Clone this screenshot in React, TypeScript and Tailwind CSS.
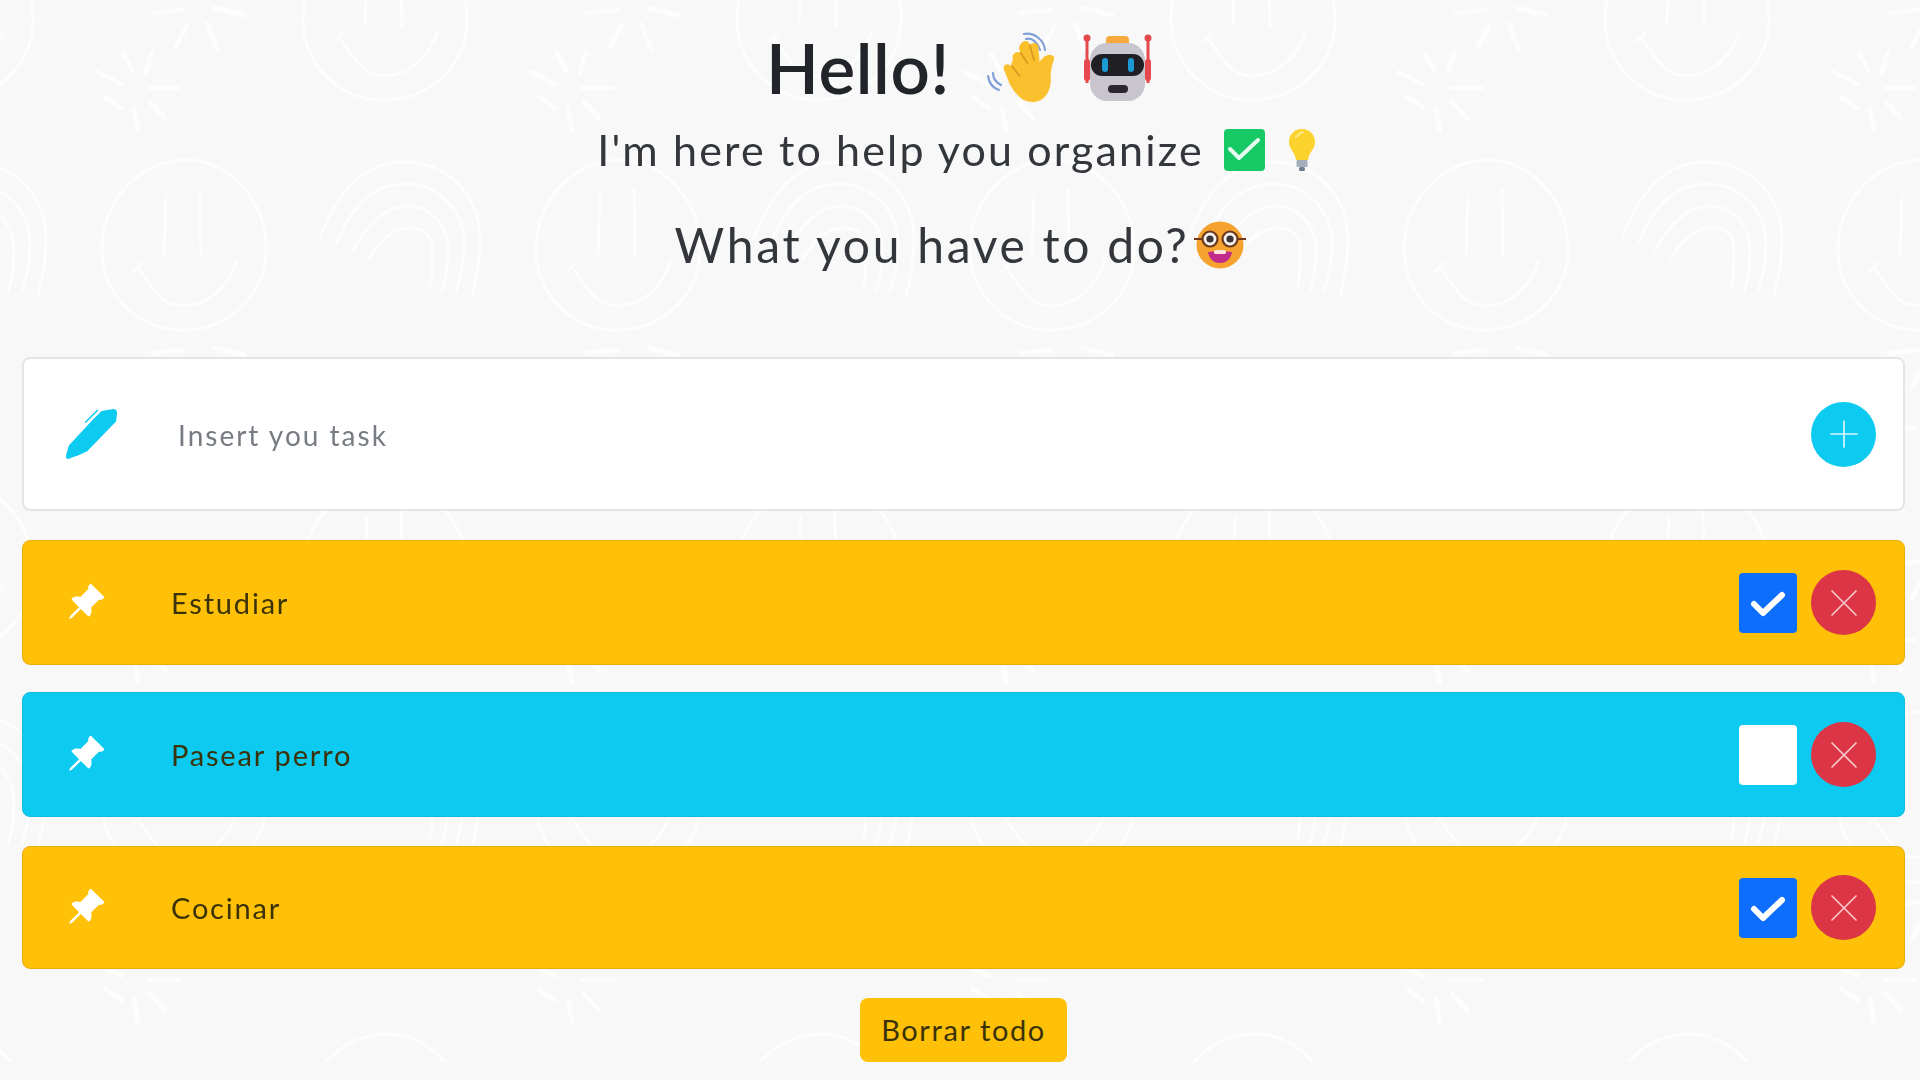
import { BsPinAngleFill } from "react-icons/bs";

function Face({ x, y }: { x: number; y: number }) {
  return (
    <g transform={`translate(${x} ${y})`}>
      <path d="M2 -85C40 -86 80 -50 82 0C84 50 45 84 0 85C-45 86 -82 50 -82 5C-82 -45 -45 -84 2 -85Z" />
      <path d="M-18 -50L-20 10M16 -55L17 12" />
      <path d="M-46 22C-36 36 -24 58 -8 60C14 64 40 50 50 22" />
      <path d="M-50 26L-42 18M52 16L50 26" />
    </g>
  );
}

function Rainbow({ x, y }: { x: number; y: number }) {
  return (
    <g transform={`translate(${x} ${y})`}>
      <path d="M-84 -2C-66 -50 -40 -78 0 -78C48 -78 76 -40 76 0C76 22 72 40 68 56" />
      <path d="M-68 4C-52 -36 -30 -56 2 -56C36 -56 60 -28 60 4C60 24 56 40 52 52" />
      <path d="M-52 12C-38 -14 -20 -34 4 -34C26 -34 44 -14 44 8C44 26 42 40 38 52" />
      <path d="M-36 20C-24 0 -12 -12 6 -12C18 -12 28 -6 28 8C28 24 28 38 26 46" />
    </g>
  );
}

function Sparkle({ x, y }: { x: number; y: number }) {
  const lines = [
    "M10 0L40 0",
    "M-18 -4L-42 -16",
    "M-18 20L-34 9",
    "M-5 20L-1 42",
    "M11 14L26 30",
    "M13 -36L7 -16",
    "M-16 -34L-7 -18",
    "M14 -75L44 -78",
    "M76 -80L105 -73",
    "M48 -62L37 -41",
    "M68 -64L78 -39",
  ];
  return (
    <g transform={`translate(${x} ${y})`}>
      {lines.map((d) => (
        <path key={d} d={d} strokeWidth="5" />
      ))}
    </g>
  );
}

function Background() {
  return (
    <svg className="absolute inset-0 w-full h-full" xmlns="http://www.w3.org/2000/svg">
      <defs>
        <pattern id="doodles" x="0" y="0" width="434" height="552" patternUnits="userSpaceOnUse">
          <g fill="none" stroke="#ffffff" strokeWidth="3" strokeLinecap="round" strokeLinejoin="round">
            <Face x={385} y={15} />
            <Face x={385} y={567} />
            <Face x={-49} y={15} />
            <Face x={-49} y={567} />
            <Face x={184} y={245} />
            <Rainbow x={404} y={240} />
            <Rainbow x={-30} y={240} />
            <Sparkle x={139} y={88} />
            <Sparkle x={139} y={428} />
          </g>
        </pattern>
      </defs>
      <rect width="100%" height="100%" fill="url(#doodles)" />
    </svg>
  );
}

function WaveEmoji() {
  return (
    <svg width="76" height="72" viewBox="0 0 76 72" className="shrink-0">
      <g fill="none" stroke="#7f9fd9" strokeWidth="2.2" strokeLinecap="round">
        <path d="M40 7C46 5 52 11 54 18" />
        <path d="M38 2C48 0 58 8 59 18" />
        <path d="M2 44C3 51 7 56 13 58" />
        <path d="M7 41C7 47 11 51 15 53" />
      </g>
      <g transform="translate(7 0) scale(1.11 1)">
        <path d="M25 12C28 7 33 9 33 13C36 9 42 11 41 17L42 30C45 24 52 20 55 25C56 28 52 33 52 44C53 60 46 70 36 70C26 70 20 62 15 52L10 38C8 33 13 30 16 34L18 27C16 22 22 18 25 21C23 17 23 15 25 12Z" fill="#fbc02d" />
        <path d="M25 21L31 31M33 13L37 28M17 34L24 44" stroke="#d99a1f" strokeWidth="1.6" fill="none" strokeLinecap="round" />
      </g>
    </svg>
  );
}

function RobotEmoji() {
  return (
    <svg width="72" height="70" viewBox="0 0 72 70" className="shrink-0">
      <g stroke="#e5484d" strokeWidth="3" fill="none">
        <path d="M5 6V50M66 6V50" />
      </g>
      <circle cx="5" cy="5" r="3.5" fill="#e5484d" />
      <circle cx="66" cy="5" r="3.5" fill="#e5484d" />
      <rect x="2" y="26" width="6" height="22" rx="3" fill="#e5484d" />
      <rect x="63" y="26" width="6" height="22" rx="3" fill="#e5484d" />
      <rect x="24" y="3" width="23" height="10" rx="4" fill="#f7a93b" />
      <rect x="8" y="10" width="55" height="58" rx="17" fill="#c9c5cf" />
      <rect x="9" y="21" width="53" height="22" rx="11" fill="#1f1f24" />
      <rect x="20" y="25" width="6" height="14" rx="3" fill="#1c9ad6" />
      <rect x="46" y="25" width="6" height="14" rx="3" fill="#1c9ad6" />
      <rect x="26" y="52" width="20" height="8" rx="4" fill="#2a2630" />
    </svg>
  );
}

function CheckEmoji() {
  return (
    <svg width="41" height="42" viewBox="0 0 41 42" className="shrink-0">
      <rect width="41" height="42" rx="4" fill="#17c964" />
      <path d="M6 20L15 29L34 11" fill="none" stroke="#e5fbef" strokeWidth="4" strokeLinecap="round" strokeLinejoin="round" />
    </svg>
  );
}

function BulbEmoji() {
  return (
    <svg width="26" height="42" viewBox="0 0 26 42" className="shrink-0">
      <path d="M13 0C21 0 26 6 26 13C26 20 20 23 19 31H7C6 23 0 20 0 13C0 6 5 0 13 0Z" fill="#fcd22d" />
      <path d="M7 8C9 5 11 4 14 3" stroke="#fdeb8c" strokeWidth="2" fill="none" strokeLinecap="round" />
      <rect x="7.5" y="31" width="11" height="7" rx="1" fill="#a3adbb" />
      <rect x="10" y="38" width="6" height="4" rx="1.5" fill="#6e7c8f" />
    </svg>
  );
}

function NerdEmoji() {
  return (
    <svg width="52" height="48" viewBox="0 0 52 48" className="shrink-0">
      <circle cx="26" cy="24" r="23.5" fill="#f5a32e" />
      <path d="M14 31C18 30 34 30 38 31C37 38 32 42 26 42C20 42 15 38 14 31Z" fill="#c22b8a" />
      <rect x="20" y="29" width="12" height="4" rx="1.5" fill="#fbe4dc" />
      <circle cx="16" cy="18" r="7.5" fill="#f5f2f0" stroke="#6b3a1c" strokeWidth="2.2" />
      <circle cx="36" cy="18" r="7.5" fill="#f5f2f0" stroke="#6b3a1c" strokeWidth="2.2" />
      <circle cx="16" cy="18" r="3.6" fill="#3b3436" />
      <circle cx="36" cy="18" r="3.6" fill="#3b3436" />
      <path d="M0 18L8 18M44 18L52 18" stroke="#6b3a1c" strokeWidth="2" />
    </svg>
  );
}

function PenIcon() {
  return (
    <svg width="52" height="52" viewBox="0 0 54 54" className="shrink-0">
      <path d="M3 39L27 13L37 3L49 1C52 1 53 3 53 6L52 14L22 45L13 49L2 53C0 53 0 51 0 49Z" fill="#0dcaf0" />
      <path d="M20 15L33 2" stroke="#0dcaf0" strokeWidth="1.6" fill="none" />
    </svg>
  );
}

function CloseButton() {
  return (
    <button className="w-[65px] h-[65px] rounded-full bg-[#dc3545] flex items-center justify-center shrink-0">
      <svg width="28" height="28" viewBox="0 0 28 28">
        <path d="M2 2L26 26M26 2L2 26" stroke="#f6c6cb" strokeWidth="1.7" strokeLinecap="round" />
      </svg>
    </button>
  );
}

function TaskRow({ label, done, height, color }: { label: string; done: boolean; height: string; color: string }) {
  return (
    <div className={`${height} ${color} border rounded-lg flex items-center pl-[41px] pr-[28px]`}>
      <div className="w-[44px] flex justify-center text-white text-[40px] shrink-0 -mt-[2px]">
        <BsPinAngleFill />
      </div>
      <span className="ml-[63px] grow text-[29px] tracking-[1.8px] text-[#3b3208]">{label}</span>
      {done ? (
        <div className="w-[58px] h-[60px] rounded bg-[#0d6efd] flex items-center justify-center shrink-0">
          <svg width="36" height="28" viewBox="0 0 36 28">
            <path d="M4 15L13 24L32 6" fill="none" stroke="#ffffff" strokeWidth="6" strokeLinecap="round" strokeLinejoin="round" />
          </svg>
        </div>
      ) : (
        <div className="w-[58px] h-[60px] rounded bg-white shrink-0" />
      )}
      <div className="ml-[14px] shrink-0">
        <CloseButton />
      </div>
    </div>
  );
}

export default function App() {
  return (
    <div className="relative h-screen overflow-hidden bg-[#f8f8f8] font-['Lato',sans-serif] text-[#212529]">
      <div className="blur-[0.7px]">
        <div className="opacity-70">
          <Background />
        </div>
        <div className="relative flex flex-col pt-[20px]">
          <header className="flex flex-col items-center">
            <div className="h-[96px] flex items-center">
              <h1 className="text-[69px] font-semibold tracking-[0.6px]">Hello!</h1>
              <div className="ml-[36px]">
                <WaveEmoji />
              </div>
              <div className="ml-[20px]">
                <RobotEmoji />
              </div>
            </div>
            <div className="h-[68px] flex items-center pr-[8px]">
              <p className="text-[43px] tracking-[2.15px] text-[#33373b]">I'm here to help you organize</p>
              <div className="ml-[20px]">
                <CheckEmoji />
              </div>
              <div className="ml-[24px]">
                <BulbEmoji />
              </div>
            </div>
            <div className="mt-[27px] h-[68px] flex items-center">
              <p className="text-[48px] tracking-[2.7px] text-[#33373b]">What you have to do?</p>
              <div className="ml-[4px]">
                <NerdEmoji />
              </div>
            </div>
          </header>
          <main className="mt-[78px] pl-[22px] pr-[15px] flex flex-col">
            <div className="h-[154px] bg-white border-2 border-[#e3e5e8] rounded-lg flex items-center pl-[42px] pr-[27px]">
              <PenIcon />
              <input
                placeholder="Insert you task"
                className="ml-[60px] pt-[1px] grow text-[28px] tracking-[2px] outline-none placeholder:text-[#777c82]"
              />
              <button className="w-[65px] h-[65px] rounded-full bg-[#0dcaf0] flex items-center justify-center shrink-0">
                <svg width="28" height="28" viewBox="0 0 28 28">
                  <path d="M14 1V27M1 14H27" stroke="#d9f6fc" strokeWidth="1.7" strokeLinecap="round" />
                </svg>
              </button>
            </div>
            <div className="mt-[29px]">
              <TaskRow label="Estudiar" done height="h-[125px]" color="bg-[#ffc107] border-[#e8b00c]" />
            </div>
            <div className="mt-[27px]">
              <TaskRow label="Pasear perro" done={false} height="h-[125px]" color="bg-[#0dcaf0] border-[#12bcdd]" />
            </div>
            <div className="mt-[29px]">
              <TaskRow label="Cocinar" done height="h-[123px]" color="bg-[#ffc107] border-[#e8b00c]" />
            </div>
            <div className="mt-[29px] flex justify-center">
              <button className="w-[207px] h-[64px] rounded-lg bg-[#ffc107] text-[29px] tracking-[1.6px] text-[#3b3208]">
                Borrar todo
              </button>
            </div>
          </main>
        </div>
      </div>
    </div>
  );
}
